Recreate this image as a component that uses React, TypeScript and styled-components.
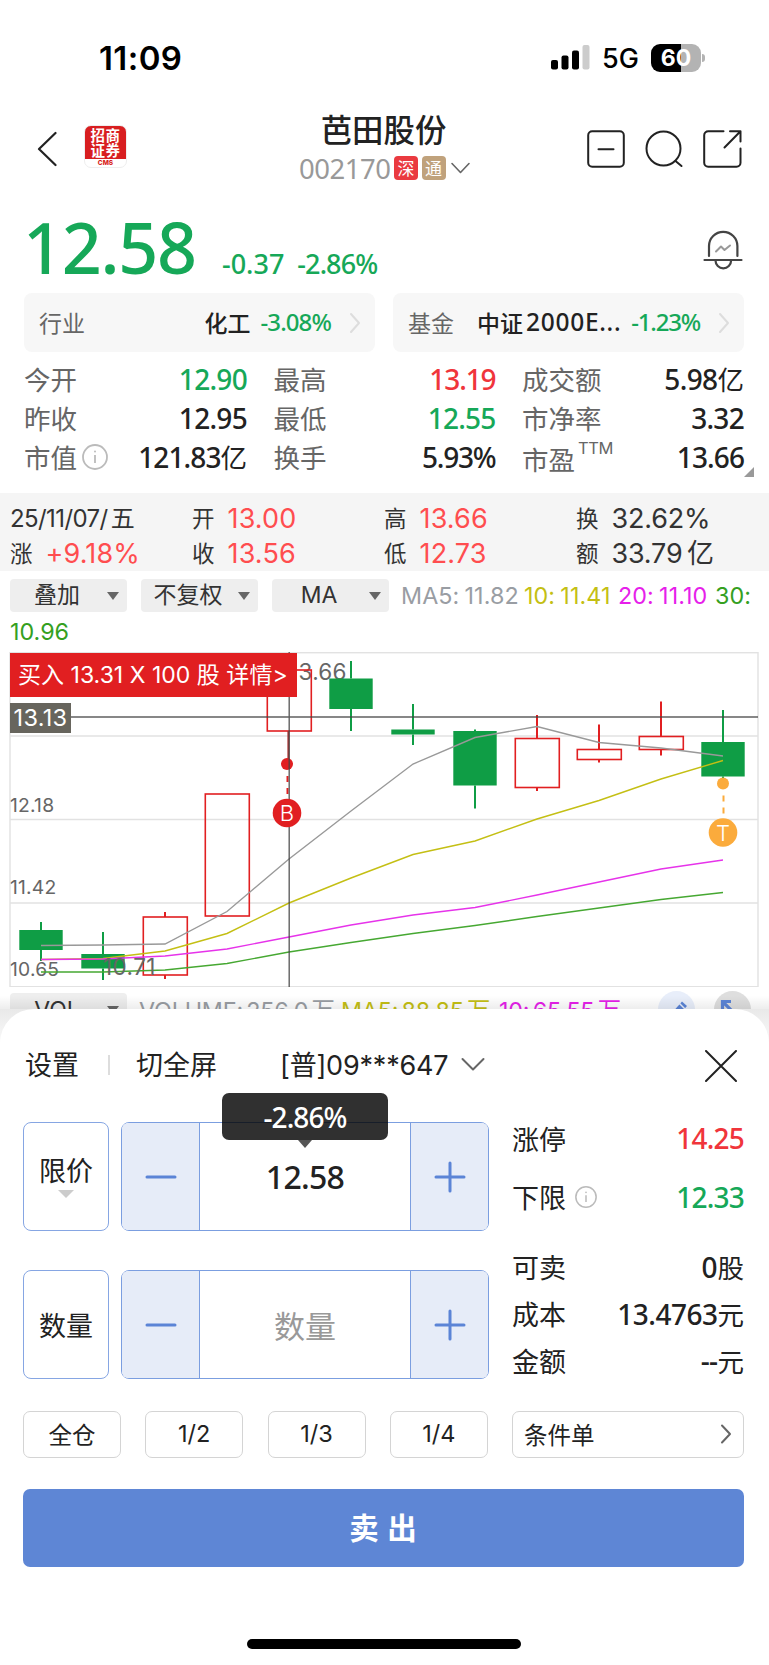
import React from 'react';
import styled, { createGlobalStyle } from 'styled-components';

const GREEN = '#16a858';
const RED = '#f0353b';
const INK = '#222';
const BLUE = '#5b84d6';

const DIN = `'Noto Sans', 'Noto Sans CJK SC', sans-serif`;
const SF = `Inter, 'Noto Sans CJK SC', sans-serif`;

const Global = createGlobalStyle`
  * { box-sizing: border-box; }
  body { margin: 0; background: #fff; }
  button { font: inherit; color: inherit; padding: 0; margin: 0; background: none; border: 0; }
`;

const Page = styled.div`
  width: 769px;
  height: 1665px;
  overflow: hidden;
  background: #fff;
  color: ${INK};
  font-family: 'Noto Sans CJK SC', sans-serif;
  display: flex;
  flex-direction: column;
  white-space: nowrap;
`;

const Num = styled.span<{ $size: number; $color?: string; $ls?: number; $weight?: number }>`
  font-family: ${DIN};
  font-size: ${p => p.$size}px;
  font-weight: ${p => p.$weight ?? 500};
  color: ${p => p.$color ?? INK};
  letter-spacing: ${p => p.$ls ?? 0}px;
`;

/* status bar */
const StatusBar = styled.header`
  height: 113px;
  flex: none;
  padding: 2px 62px 0 99px;
  display: flex;
  align-items: center;
  font-family: ${SF};
  color: #000;
`;
const Clock = styled.div`
  flex: 1;
  font-size: 33px;
  font-weight: 600;
  letter-spacing: 0.4px;
`;
const Network = styled.div`
  width: 49px;
  margin-left: 12px;
  font-size: 27px;
  font-weight: 500;
  padding-top: 2px;
`;
const Battery = styled.div`
  position: relative;
  width: 50px;
  height: 28px;
  border-radius: 9px;
  margin-right: 6px;
  background: linear-gradient(90deg, #000 30px, #b3b3b3 30px);
  color: #fff;
  font-size: 23px;
  font-weight: 700;
  line-height: 28px;
  text-align: center;
  &::after {
    content: '';
    position: absolute;
    right: -4px;
    top: 10px;
    width: 3px;
    height: 8px;
    border-radius: 0 4px 4px 0;
    background: #b3b3b3;
  }
`;

/* title bar */
const TitleBar = styled.div`
  height: 87px;
  flex: none;
  padding: 0 26px 0 37px;
  display: grid;
  grid-template-columns: 262px 172px 1fr;
  align-items: start;
`;
const TitleLeft = styled.div`
  display: flex;
  gap: 27px;
  padding-top: 12px;
  svg { margin-top: 6px; }
`;
const Logo = styled.div`
  width: 43px;
  height: 43px;
  border-radius: 7px;
  border: 1px solid #eee;
  background: linear-gradient(#d81e20 34px, #fff 34px);
  background-origin: border-box;
  text-align: center;
`;
const LogoMark = styled.div`
  height: 34px;
  padding-top: 1px;
  color: #fff;
  font-size: 14.5px;
  font-weight: 700;
  line-height: 15px;
  letter-spacing: 0.6px;
`;
const LogoCaption = styled.div`
  color: #d81e20;
  font: 800 6.5px/7px Inter, sans-serif;
`;
const TitleCenter = styled.div`
  display: flex;
  flex-direction: column;
  align-items: center;
`;
const StockName = styled.div`
  font-size: 31.4px;
  font-weight: 500;
  line-height: 32px;
  height: 40px;
  padding-right: 3px;
`;
const CodeRow = styled.div`
  display: flex;
  align-items: center;
  height: 30px;
  gap: 3.5px;
`;
const Tag = styled.span<{ $bg: string }>`
  width: 24px;
  height: 24px;
  border-radius: 4px;
  background: ${p => p.$bg};
  color: #fff;
  font-size: 17px;
  line-height: 23px;
  text-align: center;
`;
const TitleRight = styled.div`
  display: flex;
  justify-content: flex-end;
  gap: 20px;
  padding-top: 17px;
`;

/* price */
const PriceRow = styled.div`
  height: 93px;
  flex: none;
  padding: 0 26px 0 23px;
  display: flex;
`;
const Price = styled.div`
  width: 199px;
  padding-top: 5px;
  font: 500 70px/85px ${DIN};
  letter-spacing: -1.3px;
  color: ${GREEN};
`;
const Change = styled.div`
  flex: 1;
  display: flex;
  gap: 13px;
  padding-top: 45px;
  line-height: 38px;
`;
const BellBox = styled.div`
  padding-top: 29px;
`;

/* sector cards */
const Cards = styled.div`
  flex: none;
  height: 59px;
  padding: 0 25px 0 24px;
  display: grid;
  grid-template-columns: 351px 351px;
  gap: 18px;
`;
const Card = styled.div`
  display: flex;
  align-items: center;
  height: 59px;
  padding: 0 13px 2px 15px;
  border-radius: 8px;
  background: #f7f7f7;
  font-size: 23px;
`;
const CardLabel = styled.span`
  flex: 1;
  color: #666;
`;
const CardName = styled.span`
  font-weight: 500;
  margin-right: 10px;
  display: flex;
  align-items: center;
`;
const CardChevron = styled.span`
  margin-left: 18px;
  display: flex;
  padding-top: 2px;
`;

/* quote stats */
const Stats = styled.div`
  position: relative;
  flex: none;
  height: 141px;
  padding: 7px 25px 0 24px;
  display: grid;
  grid-template-columns: 223px 222px 222px;
  column-gap: 26.5px;
  grid-auto-rows: 39px;
`;
const Stat = styled.div`
  display: flex;
  align-items: center;
  justify-content: space-between;
`;
const StatLabel = styled.span<{ $drop?: boolean }>`
  display: flex;
  align-items: center;
  font-size: 26.5px;
  color: #666;
  gap: 5px;
  padding-top: ${p => (p.$drop ? 4 : 0)}px;
`;
const StatValue = styled.span`
  display: flex;
  align-items: center;
  font-size: 26.5px;
`;
const Sup = styled.span`
  font: 400 16.5px/17px Inter, sans-serif;
  margin: -20px 0 0 -2px;
  letter-spacing: -0.4px;
`;
const Corner = styled.span`
  position: absolute;
  right: 15px;
  bottom: 16px;
  border-left: 10px solid transparent;
  border-bottom: 10px solid #999;
`;

/* selected day */
const DayBar = styled.div`
  flex: none;
  height: 78px;
  padding: 8px 0 0 10px;
  background: #f5f5f5;
  display: grid;
  grid-template-columns: 182px 192px 192px 1fr;
  grid-auto-rows: 35px;
  font: 400 22.5px/35px ${SF};
`;
const DayCell = styled.div`
  display: flex;
  align-items: center;
  gap: 13px;
  color: #333;
`;
const DayValue = styled.span<{ $up?: boolean }>`
  font-size: 27px;
  letter-spacing: ${p => (p.$up ? 0.15 : -0.2)}px;
  color: ${p => (p.$up ? '#ff4d4f' : '#333')};
`;
const DayDate = styled.span`
  font-size: 24px;
  letter-spacing: -0.6px;
  word-spacing: -3px;
`;

/* indicator selectors */
const Toolbar = styled.div`
  flex: none;
  height: 41px;
  padding: 7px 0 0 10px;
  display: flex;
  align-items: center;
  font: 400 23.3px/33px ${SF};
`;
const Select = styled.div`
  width: 117px;
  height: 33px;
  margin-right: 14px;
  padding: 1px 8px 0 0;
  border-radius: 4px;
  background: #eee;
  color: #333;
  font-size: 23px;
  display: flex;
  align-items: center;
`;
const SelectText = styled.span`
  flex: 1;
  padding-right: 3px;
  text-align: center;
`;
const Down = styled.i<{ $w: number; $h: number; $color: string }>`
  border: ${p => p.$w}px solid transparent;
  border-bottom: 0;
  border-top: ${p => p.$h}px solid ${p => p.$color};
`;
const Ma = styled.span<{ $color: string; $w: number; $tight?: boolean }>`
  width: ${p => p.$w}px;
  margin-left: -2px;
  margin-right: 2px;
  color: ${p => p.$color};
  letter-spacing: ${p => (p.$tight ? -0.2 : 0.1)}px;
  word-spacing: ${p => (p.$tight ? -3 : -1.5)}px;
`;
const MaWrap = styled.div`
  flex: none;
  height: 40px;
  padding: 7px 0 0 10px;
  font: 400 23.3px/26px ${SF};
  color: #35a01f;
`;

/* candlestick chart */
const ChartArea = styled.div`
  position: relative;
  flex: none;
  height: 335px;
  svg { display: block; }
`;
const TradeBanner = styled.div`
  position: absolute;
  left: 10px;
  top: 1px;
  width: 287px;
  height: 44px;
  padding-left: 8px;
  background: #e11f21;
  color: #fff;
  font: 400 23px/44px ${SF};
  letter-spacing: 0.02px;
`;
const CursorPrice = styled.div`
  position: absolute;
  left: 10px;
  top: 51px;
  width: 61px;
  height: 30px;
  background: #67655d;
  color: #fff;
  text-align: center;
  font: 400 23.5px/29px ${SF};
  letter-spacing: 0.3px;
`;

const VolumeRow = styled.div`
  position: relative;
  flex: none;
  height: 22px;
  padding: 6px 17px 0 10px;
  display: flex;
  align-items: flex-start;
  overflow: hidden;
  font: 400 23.3px/35px ${SF};
  &::after {
    content: '';
    position: absolute;
    inset: 0;
    background: linear-gradient(180deg, rgba(0, 0, 0, 0) 40%, rgba(0, 0, 0, 0.07));
  }
`;
const RoundTool = styled.span<{ $bg: string }>`
  flex: none;
  width: 37px;
  height: 37px;
  margin: -2px 0 0 19px;
  border-radius: 50%;
  background: ${p => p.$bg};
`;

/* order sheet */
const SheetBack = styled.div`
  flex: 1;
  background: linear-gradient(180deg, #e9e9e9, #f6f6f6 28px, #fff 40px);
`;
const Sheet = styled.section`
  height: 100%;
  border-radius: 34px 34px 0 0;
  background: #fff;
  padding: 0 25px 0 23px;
  display: flex;
  flex-direction: column;
`;
const SheetHeader = styled.div`
  flex: none;
  height: 113px;
  padding: 0 7px 4px 2px;
  display: flex;
  align-items: center;
  font-size: 27px;
`;
const CloseIcon = styled.svg`
  margin-top: 4px;
`;
const Divider = styled.i`
  width: 2px;
  height: 20px;
  margin: 2px 26px 0 29px;
  background: #ddd;
`;
const Account = styled.div`
  display: flex;
  align-items: center;
  flex: 1;
  margin-left: 63px;
  gap: 13px;
  span { font-family: ${SF}; letter-spacing: -0.2px; }
`;
const OrderBody = styled.div`
  flex: none;
  display: grid;
  grid-template-columns: 466px 232px;
  gap: 23px;
  height: 289px;
`;
const Inputs = styled.div`
  display: flex;
  flex-direction: column;
  gap: 39px;
`;
const InputRow = styled.div`
  display: flex;
  gap: 12px;
  height: 109px;
`;
const TypeBox = styled.button`
  width: 86px;
  border: 1.5px solid #86a6e3;
  border-radius: 8px;
  font-size: 27px;
  line-height: 30px;
  display: flex;
  flex-direction: column;
  align-items: center;
  justify-content: center;
  gap: 5px;
`;
const Stepper = styled.div`
  position: relative;
  flex: 1;
  display: grid;
  grid-template-columns: 78px 1fr 78px;
  border: 1.5px solid #7b9ee0;
  border-radius: 8px;
`;
const StepButton = styled.button<{ $side: 'left' | 'right' }>`
  display: flex;
  align-items: center;
  justify-content: center;
  background: #e6ecf8;
  border-${p => (p.$side === 'left' ? 'right' : 'left')}: 1.5px solid #7b9ee0;
  border-radius: ${p => (p.$side === 'left' ? '6px 0 0 6px' : '0 6px 6px 0')};
`;
const StepValue = styled.div`
  display: flex;
  align-items: center;
  justify-content: center;
  padding-bottom: 1px;
  font-size: 31px;
  color: #999;
`;
const Tooltip = styled.div`
  position: absolute;
  left: 100px;
  top: -30px;
  width: 166px;
  height: 47px;
  border-radius: 7px;
  background: rgba(0, 0, 0, 0.81);
  text-align: center;
  line-height: 49px;
  &::after {
    content: '';
    position: absolute;
    left: 76px;
    top: 47px;
    border: 7px solid transparent;
    border-bottom: 0;
    border-top: 8px solid #555;
  }
`;
const Limits = styled.div`
  display: flex;
  flex-direction: column;
  margin-top: -2px;
`;
const LimitRow = styled.div<{ $h: number }>`
  height: ${p => p.$h}px;
  display: flex;
  align-items: center;
  justify-content: space-between;
  font-size: 27px;
`;
const LimitLabel = styled.span`
  display: flex;
  align-items: center;
  gap: 9px;
`;
const Shortcuts = styled.div`
  flex: none;
  display: grid;
  grid-template-columns: repeat(4, 98px) 232px;
  justify-content: space-between;
  height: 47px;
`;
const Shortcut = styled.button<{ $wide?: boolean }>`
  display: flex;
  align-items: center;
  justify-content: ${p => (p.$wide ? 'space-between' : 'center')};
  padding: ${p => (p.$wide ? '0 11px 1px' : '0 0 1px')};
  border: 1.5px solid #d4d4d4;
  border-radius: 7px;
  font-size: 23.5px;
`;
const Fraction = styled.span`
  font: 400 23.5px/28px ${SF};
`;
const Sell = styled.button`
  flex: none;
  height: 78px;
  margin-top: 31px;
  padding: 0 1px 4px 0;
  border-radius: 7px;
  background: #5e86d5;
  color: #fff;
  font-size: 29.5px;
  font-weight: 700;
  word-spacing: 2px;
`;
const HomeBar = styled.div`
  flex: none;
  width: 274px;
  height: 10px;
  margin: 72px auto 0;
  border-radius: 5px;
  background: #000;
`;

/* icons */
const Chevron = ({ w, h, d, color, sw = 2 }: { w: number; h: number; d: string; color: string; sw?: number }) => (
  <svg width={w} height={h} fill="none" stroke={color} strokeWidth={sw} strokeLinecap="round" strokeLinejoin="round">
    <path d={d} />
  </svg>
);
const Info = ({ size }: { size: number }) => (
  <svg width={size} height={size} viewBox="0 0 26 26" fill="none" stroke="#bbb" strokeWidth="1.8">
    <circle cx="13" cy="13" r="12" />
    <path d="M13 11v8" />
    <circle cx="13" cy="7.5" r="1" fill="#bbb" stroke="none" />
  </svg>
);
const Signal = () => (
  <svg width="39" height="25">
    <rect x="0" y="15" width="7" height="9.5" rx="2" />
    <rect x="10.5" y="10.5" width="7" height="14" rx="2" />
    <rect x="21" y="5.5" width="7" height="19" rx="2" />
    <rect x="31.5" y="0" width="7" height="24.5" rx="2" fill="#ccc" />
  </svg>
);
const Step = ({ plus }: { plus?: boolean }) => (
  <svg width="32" height="32" stroke={BLUE} strokeWidth="3" strokeLinecap="round">
    <path d={plus ? 'M2 16H30M16 2V30' : 'M2 16H30'} />
  </svg>
);

type Candle = { x: number; top: number; bottom: number; high: number; low: number; up?: boolean };
const candles: Candle[] = [
  { x: 41, top: 930, bottom: 950, high: 922, low: 961 },
  { x: 103, top: 954, bottom: 968.5, high: 932, low: 980 },
  { x: 165, top: 917, bottom: 975, high: 912, low: 979, up: true },
  { x: 227, top: 794, bottom: 916, high: 794, low: 916, up: true },
  { x: 289, top: 670, bottom: 731, high: 670, low: 731, up: true },
  { x: 351, top: 678.5, bottom: 709, high: 661, low: 731 },
  { x: 413, top: 729.5, bottom: 734.5, high: 704, low: 745 },
  { x: 475, top: 731, bottom: 785.5, high: 729.5, low: 808.5 },
  { x: 537, top: 738.5, bottom: 787.5, high: 715, low: 791, up: true },
  { x: 599, top: 749.5, bottom: 759.5, high: 724.5, low: 762.5, up: true },
  { x: 661, top: 736.5, bottom: 749.5, high: 701.5, low: 755.5, up: true },
  { x: 723, top: 742, bottom: 776.5, high: 710, low: 778 },
];
const averages: { color: string; ys: number[] }[] = [
  { color: '#999', ys: [945.5, 945, 944, 911.5, 859, 811, 764, 737.5, 726.5, 742.5, 748, 756] },
  { color: '#c4bf14', ys: [959.5, 958.5, 951, 933.5, 903, 878, 854.5, 841, 819, 800.5, 779, 760.5] },
  { color: '#e633ea', ys: [959.5, 959, 956, 949, 937, 925, 915, 907.5, 895, 882, 869, 860] },
  { color: '#46a832', ys: [972, 972, 970, 963.5, 952, 942.5, 933.5, 925.5, 916.5, 908, 899.5, 892.5] },
];

const MarkerStem = ({ x, y, color }: { x: number; y: number; color: string }) => (
  <g>
    <circle cx={x} cy={y} r="6" fill={color} />
    <path d={`M${x + 0.5} ${y + 12}v6m0 6v6`} stroke={color} strokeWidth="2" />
  </g>
);
const MarkerBadge = ({ x, y, color, letter }: { x: number; y: number; color: string; letter: string }) => (
  <g>
    <circle cx={x} cy={y} r="14.3" fill={color} />
    <text x={x} y={y + 8} fill="#fff" fontSize="22" fontWeight="300" textAnchor="middle">{letter}</text>
  </g>
);

const Chart = () => (
  <svg width="769" height="335" viewBox="0 652 769 335" fontFamily={SF}>
    <g fill="none" stroke="#e2e2e2" strokeWidth="1.4">
      <rect x="10" y="652.7" width="748" height="334" />
      <path d="M10 736H758M10 819.5H758M10 903H758" />
    </g>
    <text x="289" y="679.5" fontSize="22.5" fill="#666" letterSpacing="0.3">13.66</text>
    <g fill="#666" fontSize="19.3" letterSpacing="0.2">
      <text x="10" y="812">12.18</text>
      <text x="10" y="894">11.42</text>
      <text x="10" y="976">10.65</text>
    </g>
    {candles.map(c => {
      const color = c.up ? '#e11f21' : '#0f9d45';
      return (
        <g key={c.x} stroke={color}>
          <path d={`M${c.x} ${c.high}V${c.top}M${c.x} ${c.bottom}V${c.low}`} strokeWidth="2" />
          {c.up
            ? <rect x={c.x - 21.7} y={c.top} width="44" height={c.bottom - c.top} fill="none" strokeWidth="1.6" />
            : <rect x={c.x - 21.7} y={c.top} width="43.4" height={c.bottom - c.top} fill={color} stroke="none" />}
        </g>
      );
    })}
    {averages.map(a => (
      <polyline
        key={a.color}
        points={a.ys.map((y, i) => `${41 + i * 62},${y}`).join(' ')}
        fill="none"
        stroke={a.color}
        strokeWidth="1.4"
      />
    ))}
    <text x="103" y="975" fontSize="22.5" fill="#666" letterSpacing="0.4">10.71</text>
    <path d="M288.4 731V760" stroke="#a33" strokeWidth="2" />
    <MarkerStem x={287} y={764} color="#e11f21" />
    <MarkerStem x={723} y={783.5} color="#fbab3c" />
    <path d="M70 717H758M289.2 652V987" stroke="#444" strokeOpacity="0.85" strokeWidth="1.4" />
    <MarkerBadge x={287} y={813} color="#e11f21" letter="B" />
    <MarkerBadge x={723} y={832.5} color="#fbab3c" letter="T" />
  </svg>
);

export default function App() {
  return (
    <Page>
      <Global />
      <StatusBar>
        <Clock>11:09</Clock>
        <Signal />
        <Network>5G</Network>
        <Battery>60</Battery>
      </StatusBar>

      <TitleBar>
        <TitleLeft>
          <Chevron w={20} h={36} d="M18.5 2L2 18L18.5 34" color="#222" sw={2.2} />
          <Logo>
            <LogoMark>招商<br />证券</LogoMark>
            <LogoCaption>CMS</LogoCaption>
          </Logo>
        </TitleLeft>
        <TitleCenter>
          <StockName>芭田股份</StockName>
          <CodeRow>
            <Num $size={27.5} $color="#999" $weight={400} $ls={-0.45}>002170</Num>
            <Tag $bg="#ea3a40">深</Tag>
            <Tag $bg="#c0a27c">通</Tag>
            <Chevron w={22} h={12} d="M3 1.5L11.5 10.5L20 1.5" color="#666" sw={1.6} />
          </CodeRow>
        </TitleCenter>
        <TitleRight>
          <svg width="38" height="38" fill="none" stroke="#222" strokeWidth="2" strokeLinecap="round">
            <rect x="1.2" y="1.2" width="35.6" height="35.6" rx="4" />
            <path d="M11.5 19.3H26.5" />
          </svg>
          <svg width="38" height="38" fill="none" stroke="#222" strokeWidth="2" strokeLinecap="round">
            <circle cx="18.5" cy="18.5" r="17" />
            <path d="M30.5 31L36.5 36" />
          </svg>
          <svg width="40" height="38" fill="none" stroke="#222" strokeWidth="2" strokeLinecap="round" strokeLinejoin="round">
            <path d="M20.5 1.2H5.2a4 4 0 0 0-4 4V32.8a4 4 0 0 0 4 4H33.5a4 4 0 0 0 4-4V18.5" />
            <path d="M27 1.2H37.5V11.5M37 1.7L21.5 17.5" />
          </svg>
        </TitleRight>
      </TitleBar>

      <PriceRow>
        <Price>12.58</Price>
        <Change>
          <Num $size={27} $color={GREEN}>-0.37</Num>
          <Num $size={27} $color={GREEN} $ls={-0.9}>-2.86%</Num>
        </Change>
        <BellBox>
          <svg width="40" height="42" fill="none" stroke="#444" strokeWidth="2.2" strokeLinecap="round" strokeLinejoin="round">
            <path d="M6 27V17a14.2 14.2 0 0 1 28.4 0V27" />
            <path d="M1.5 31H38.5M12.5 31.5a7.8 7.8 0 0 0 15.6 0" />
            <path d="M13 22.5L18 17.5L21.5 21L27 16.5" stroke="#999" strokeWidth="2" />
          </svg>
        </BellBox>
      </PriceRow>

      <Cards>
        <Card>
          <CardLabel>行业</CardLabel>
          <CardName>化工</CardName>
          <Num $size={24} $color={GREEN} $ls={-0.9}>-3.08%</Num>
          <CardChevron><Chevron w={13} h={22} d="M2 2L10 11L2 20" color="#ddd" /></CardChevron>
        </Card>
        <Card>
          <CardLabel>基金</CardLabel>
          <CardName>中证<Num $size={24.5} $ls={0.7}>&#8202;2000E...</Num></CardName>
          <Num $size={24} $color={GREEN} $ls={-1.2}>-1.23%</Num>
          <CardChevron><Chevron w={13} h={22} d="M2 2L10 11L2 20" color="#ddd" /></CardChevron>
        </Card>
      </Cards>

      <Stats>
        <Stat><StatLabel>今开</StatLabel><Num $size={28} $color={GREEN} $ls={-0.7}>12.90</Num></Stat>
        <Stat><StatLabel>最高</StatLabel><Num $size={28} $color={RED} $ls={-1.1}>13.19</Num></Stat>
        <Stat><StatLabel>成交额</StatLabel><StatValue><Num $size={28} $ls={-0.6}>5.98</Num>亿</StatValue></Stat>
        <Stat><StatLabel>昨收</StatLabel><Num $size={28} $ls={-0.7}>12.95</Num></Stat>
        <Stat><StatLabel>最低</StatLabel><Num $size={28} $color={GREEN} $ls={-0.8}>12.55</Num></Stat>
        <Stat><StatLabel>市净率</StatLabel><Num $size={28} $ls={-0.7}>3.32</Num></Stat>
        <Stat><StatLabel>市值<Info size={26} /></StatLabel><StatValue><Num $size={28} $ls={-0.9}>121.83</Num>亿</StatValue></Stat>
        <Stat><StatLabel>换手</StatLabel><Num $size={28} $ls={-1.2}>5.93%</Num></Stat>
        <Stat><StatLabel $drop>市盈<Sup>TTM</Sup></StatLabel><Num $size={28} $ls={-0.9}>13.66</Num></Stat>
        <Corner />
      </Stats>

      <DayBar>
        <DayCell><DayDate>25/11/07/ 五</DayDate></DayCell>
        <DayCell><span>开</span><DayValue $up>13.00</DayValue></DayCell>
        <DayCell><span>高</span><DayValue $up>13.66</DayValue></DayCell>
        <DayCell><span>换</span><DayValue>32.62%</DayValue></DayCell>
        <DayCell><span>涨</span><DayValue $up>+9.18%</DayValue></DayCell>
        <DayCell><span>收</span><DayValue $up>13.56</DayValue></DayCell>
        <DayCell><span>低</span><DayValue $up>12.73</DayValue></DayCell>
        <DayCell><span>额</span><DayValue>33.79&#8201;亿</DayValue></DayCell>
      </DayBar>

      <Toolbar>
        {['叠加', '不复权', 'MA'].map(t => (
          <Select key={t}>
            <SelectText>{t}</SelectText>
            <Down $w={6} $h={8} $color="#666" />
          </Select>
        ))}
        <Ma $color="#999da3" $w={123}>MA5: 11.82</Ma>
        <Ma $color="#c4bf14" $w={94}>10: 11.41</Ma>
        <Ma $color="#e61fea" $w={97}>20: 11.10</Ma>
        <Ma $color="#35a01f" $w={40}>30:</Ma>
      </Toolbar>
      <MaWrap>10.96</MaWrap>

      <ChartArea>
        <Chart />
        <TradeBanner>买入 13.31 X 100 股 详情&gt;</TradeBanner>
        <CursorPrice>13.13</CursorPrice>
      </ChartArea>

      <VolumeRow>
        <Select>
          <SelectText>VOL</SelectText>
          <Down $w={6} $h={8} $color="#666" />
        </Select>
        <Ma $color="#999da3" $w={202} $tight>VOLUME: 256.0 万</Ma>
        <Ma $color="#c4bf14" $w={158} $tight>MA5: 88.85 万</Ma>
        <Ma $color="#e61fea" $w={138} $tight>10: 65.55 万</Ma>
        <RoundTool $bg="#e8eefa">
          <svg width="37" height="37">
            <path d="M13 23L24 10.5L29 15L18 27Z" fill={BLUE} />
            <path d="M21 12L27 18" stroke="#e8eefa" strokeWidth="1.5" />
          </svg>
        </RoundTool>
        <RoundTool $bg="#dedede">
          <svg width="37" height="37" fill="none" stroke={BLUE} strokeWidth="3.2">
            <path d="M8.5 19V10.5H17M9 11L22 24" />
          </svg>
        </RoundTool>
      </VolumeRow>

      <SheetBack>
        <Sheet>
          <SheetHeader>
            <span>设置</span>
            <Divider />
            <span>切全屏</span>
            <Account>
              <span>[普]09***647</span>
              <Chevron w={24} h={14} d="M1.5 2L12 12.5L22.5 2" color="#666" />
            </Account>
            <CloseIcon width="32" height="32" stroke="#222" strokeWidth="2" strokeLinecap="round">
              <path d="M1 1L31 31M31 1L1 31" />
            </CloseIcon>
          </SheetHeader>

          <OrderBody>
            <Inputs>
              <InputRow>
                <TypeBox><span>限价</span><Down $w={8} $h={8} $color="#ccc" /></TypeBox>
                <Stepper>
                  <StepButton $side="left"><Step /></StepButton>
                  <StepValue><Num $size={32} $ls={-0.7}>12.58</Num></StepValue>
                  <StepButton $side="right"><Step plus /></StepButton>
                  <Tooltip><Num $size={28} $color="#fff" $ls={-0.9}>-2.86%</Num></Tooltip>
                </Stepper>
              </InputRow>
              <InputRow>
                <TypeBox>数量</TypeBox>
                <Stepper>
                  <StepButton $side="left"><Step /></StepButton>
                  <StepValue>数量</StepValue>
                  <StepButton $side="right"><Step plus /></StepButton>
                </Stepper>
              </InputRow>
            </Inputs>
            <Limits>
              <LimitRow $h={36}><LimitLabel>涨停</LimitLabel><Num $size={28} $color={RED} $ls={-0.8}>14.25</Num></LimitRow>
              <LimitRow $h={81}><LimitLabel>下限<Info size={22} /></LimitLabel><Num $size={28} $color={GREEN} $ls={-0.8}>12.33</Num></LimitRow>
              <LimitRow $h={59}><LimitLabel>可卖</LimitLabel><StatValue><Num $size={28}>0</Num>股</StatValue></LimitRow>
              <LimitRow $h={35}><LimitLabel>成本</LimitLabel><StatValue><Num $size={28} $ls={-0.5}>13.4763</Num>元</StatValue></LimitRow>
              <LimitRow $h={58}><LimitLabel>金额</LimitLabel><StatValue><Num $size={28} $ls={-0.6}>--</Num>元</StatValue></LimitRow>
            </Limits>
          </OrderBody>

          <Shortcuts>
            <Shortcut>全仓</Shortcut>
            {['1/2', '1/3', '1/4'].map(t => (
              <Shortcut key={t}><Fraction>{t}</Fraction></Shortcut>
            ))}
            <Shortcut $wide>
              条件单
              <Chevron w={12} h={20} d="M2 1.5L10 10L2 18.5" color="#666" />
            </Shortcut>
          </Shortcuts>

          <Sell>卖 出</Sell>
          <HomeBar />
        </Sheet>
      </SheetBack>
    </Page>
  );
}
